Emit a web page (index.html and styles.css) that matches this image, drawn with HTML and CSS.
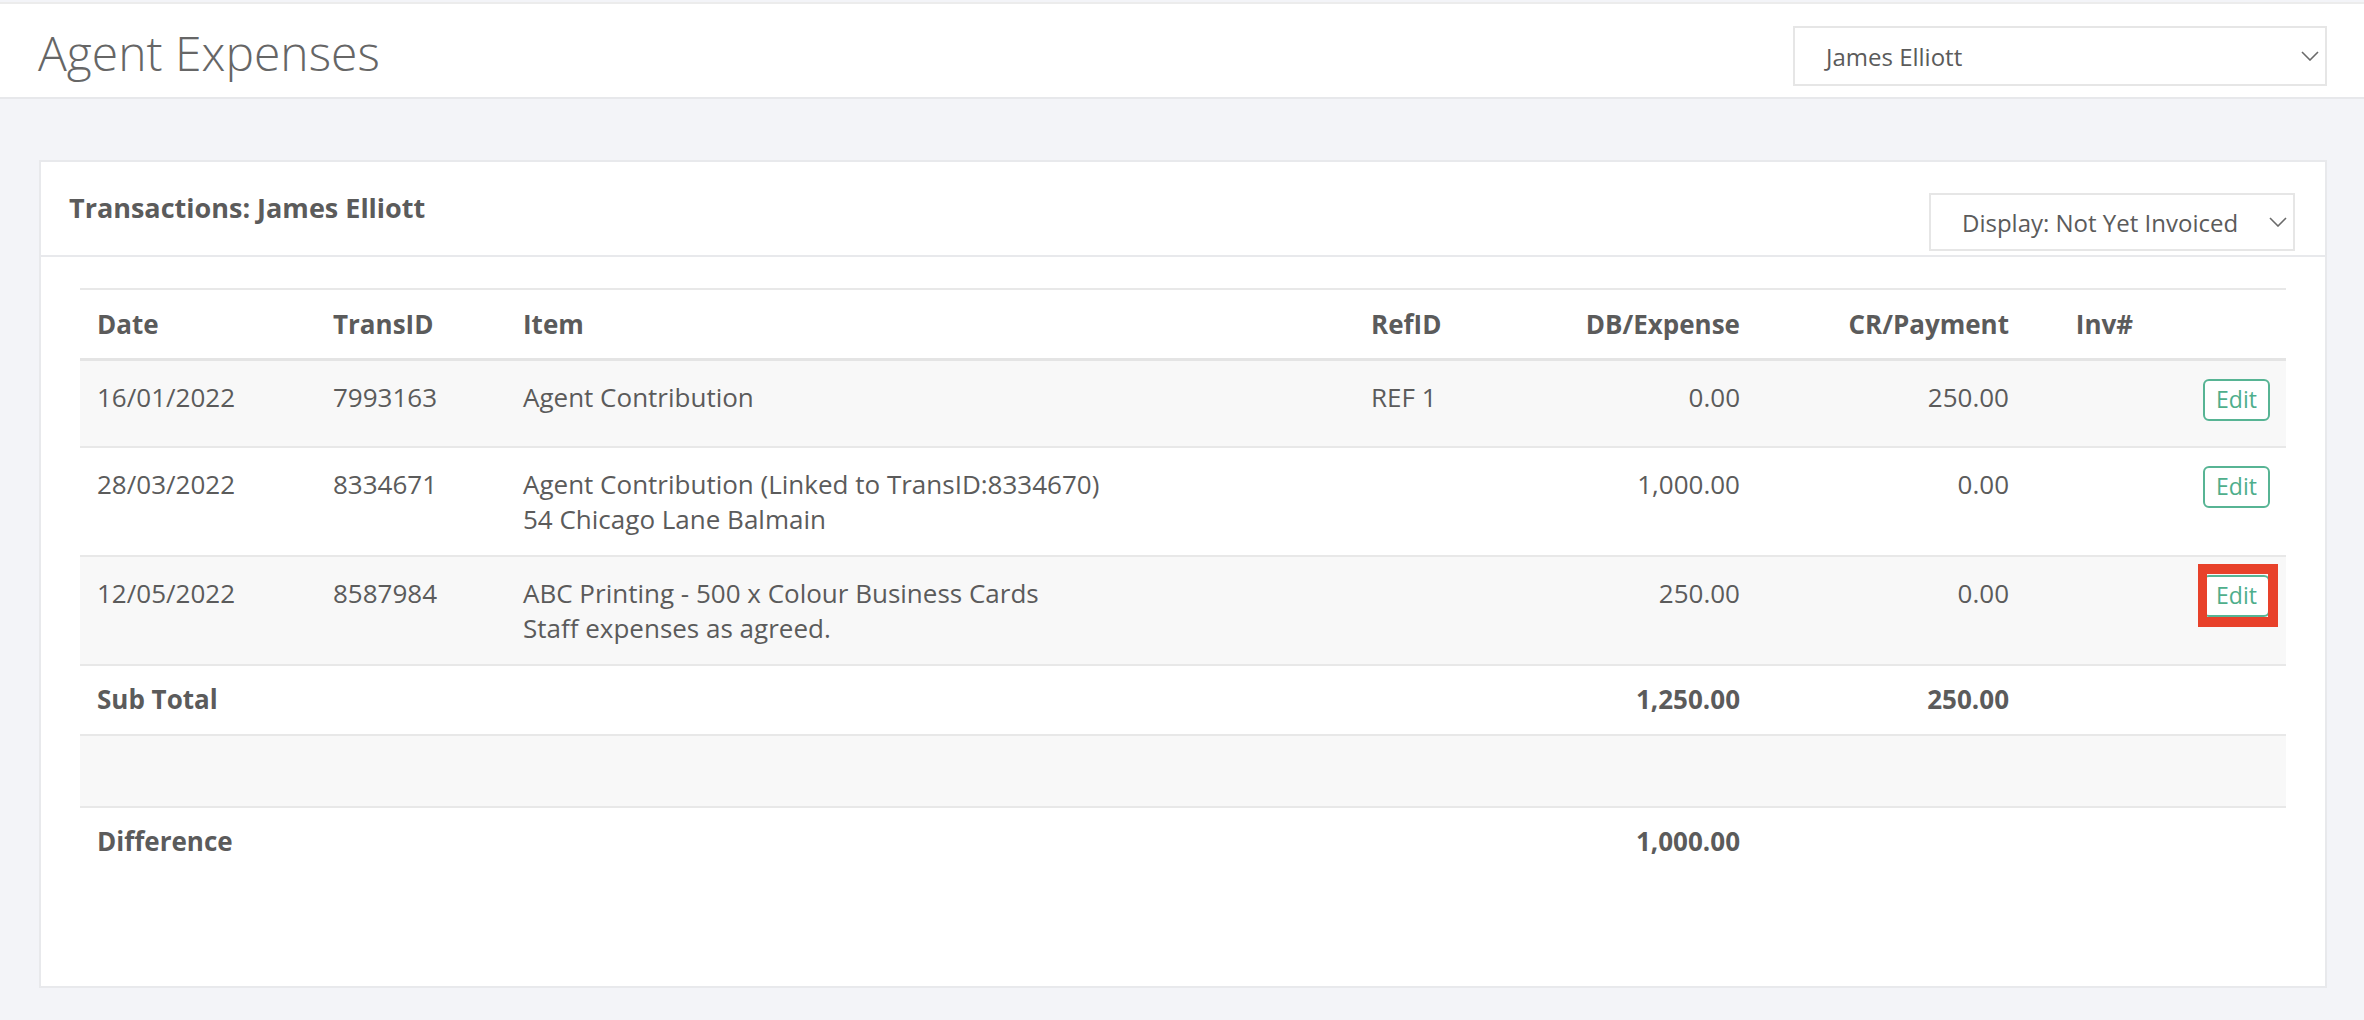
FILE: index.html
```html
<!DOCTYPE html>
<html lang="en">
<head>
<meta charset="utf-8">
<title>Agent Expenses</title>
<link rel="stylesheet" href="styles.css">
</head>
<body>
<header class="topbar">
  <h1 class="page-title">Agent Expenses</h1>
  <div class="select select-agent">
    <span class="select-text">James Elliott</span>
    <svg class="chev" viewBox="0 0 18 10" width="18" height="10"><polyline points="1,1 9,9 17,1" fill="none" stroke="#6a6a6a" stroke-width="1.6"/></svg>
  </div>
</header>
<main class="content">
  <section class="card">
    <div class="card-header">
      <h2 class="card-title">Transactions: James Elliott</h2>
      <div class="select select-display">
        <span class="select-text">Display: Not Yet Invoiced</span>
        <svg class="chev" viewBox="0 0 18 10" width="18" height="10"><polyline points="1,1 9,9 17,1" fill="none" stroke="#6a6a6a" stroke-width="1.6"/></svg>
      </div>
    </div>
    <div class="card-body">
      <table class="ledger">
        <colgroup>
          <col class="col-date"><col class="col-trans"><col class="col-item"><col class="col-ref"><col class="col-db"><col class="col-cr"><col class="col-inv"><col class="col-edit">
        </colgroup>
        <thead>
          <tr>
            <th>Date</th><th>TransID</th><th>Item</th><th>RefID</th><th class="num">DB/Expense</th><th class="num">CR/Payment</th><th class="center">Inv#</th><th></th>
          </tr>
        </thead>
        <tbody>
          <tr class="entry">
            <td>16/01/2022</td><td>7993163</td><td>Agent Contribution</td><td>REF 1</td><td class="num">0.00</td><td class="num">250.00</td><td></td>
            <td class="edit-cell"><button class="btn-edit">Edit</button></td>
          </tr>
          <tr class="entry">
            <td>28/03/2022</td><td>8334671</td><td>Agent Contribution (Linked to TransID:8334670)<br>54 Chicago Lane Balmain</td><td></td><td class="num">1,000.00</td><td class="num">0.00</td><td></td>
            <td class="edit-cell"><button class="btn-edit">Edit</button></td>
          </tr>
          <tr class="entry">
            <td>12/05/2022</td><td>8587984</td><td>ABC Printing - 500 x Colour Business Cards<br>Staff expenses as agreed.</td><td></td><td class="num">250.00</td><td class="num">0.00</td><td></td>
            <td class="edit-cell"><button class="btn-edit is-highlighted">Edit</button></td>
          </tr>
          <tr class="total-row">
            <td>Sub Total</td><td></td><td></td><td></td><td class="num">1,250.00</td><td class="num">250.00</td><td></td><td></td>
          </tr>
          <tr class="spacer-row">
            <td>&nbsp;</td><td></td><td></td><td></td><td></td><td></td><td></td><td></td>
          </tr>
          <tr class="total-row last">
            <td>Difference</td><td></td><td></td><td></td><td class="num">1,000.00</td><td></td><td></td><td></td>
          </tr>
        </tbody>
      </table>
    </div>
  </section>
</main>
</body>
</html>
```
FILE: styles.css
```css
html {
  background: #ffffff;
}

body {
  margin: 0;
  min-height: calc(100vh - 2px);
  background: #f3f4f8;
  font-family: "Open Sans", "Liberation Sans", sans-serif;
  color: #5b5b5b;
}

.topbar {
  margin-top: 2px;
  height: 93px;
  display: flex;
  justify-content: space-between;
  align-items: flex-start;
  padding: 0 37px 0 37px;
  background: #ffffff;
  border-top: 2px solid #ececec;
  border-bottom: 2px solid #e7e8eb;
}

.page-title {
  margin: 20px 0 0 1px;
  font-size: 48px;
  line-height: 58px;
  font-weight: 300;
  color: #666666;
}

.select {
  box-sizing: border-box;
  display: flex;
  align-items: center;
  justify-content: space-between;
  background: #ffffff;
  border: 2px solid #e6e6e6;
  font-size: 24px;
  color: #5b5b5b;
}

.select-agent {
  margin-top: 22px;
  width: 534px;
  height: 60px;
  padding: 0 6px 0 31px;
}

.select-display {
  margin-top: 2px;
  width: 366px;
  height: 58px;
  padding: 0 6px 0 31px;
}

.chev {
  display: block;
}

.content {
  padding: 61px 37px 32px 39px;
}

.card {
  background: #ffffff;
  border: 2px solid #e8e9ec;
}

.card-header {
  height: 95px;
  box-sizing: border-box;
  display: flex;
  justify-content: space-between;
  align-items: flex-start;
  padding: 29px 30px 0 28px;
  border-bottom: 2px solid #e8e9ec;
}

.card-title {
  margin: 0;
  font-size: 27px;
  line-height: 34px;
  font-weight: 700;
  color: #5b5b5b;
}

.card-body {
  padding: 31px 39px 110px 39px;
}

.ledger {
  width: 100%;
  border-collapse: collapse;
  table-layout: fixed;
  font-size: 26px;
  line-height: 35px;
}

.col-date { width: 236px; }
.col-trans { width: 190px; }
.col-item { width: 848px; }
.col-ref { width: 206px; }
.col-db { width: 197px; }
.col-cr { width: 269px; }
.col-inv { width: 157px; }
.col-edit { width: 103px; }

.ledger th {
  text-align: left;
  font-weight: 700;
  padding: 17px 17px 16px;
  border-top: 2px solid #e8e8e8;
  border-bottom: 3px solid #e4e4e4;
  white-space: nowrap;
}

.ledger td {
  padding: 19px 17px 18px;
  vertical-align: top;
  border-top: 2px solid #e8e8e8;
}

.ledger tbody tr:first-child td {
  border-top: none;
}

.ledger tbody tr:nth-child(odd) td {
  background: #f8f8f8;
}

.ledger .num {
  text-align: right;
}

.ledger .center {
  text-align: center;
}

.ledger .edit-cell {
  text-align: right;
  padding: 18px 16px 25px 0;
}

.ledger .total-row td {
  font-weight: 700;
  padding: 16px 17px 17px;
}

.ledger .spacer-row td {
  padding: 18px 17px 17px;
}

.btn-edit {
  position: relative;
  box-sizing: border-box;
  display: inline-flex;
  align-items: center;
  justify-content: center;
  width: 67px;
  height: 42px;
  padding: 0 0 2px;
  vertical-align: top;
  background: #ffffff;
  border: 2px solid #57b494;
  border-radius: 6px;
  font-family: "Open Sans", "Liberation Sans", sans-serif;
  font-size: 23px;
  color: #4eae8b;
}

.btn-edit.is-highlighted::after {
  content: "";
  position: absolute;
  top: -13px;
  right: -10px;
  bottom: -12px;
  left: -7px;
  border: 10px solid #e8412a;
  border-left-width: 9px;
  pointer-events: none;
}
```
